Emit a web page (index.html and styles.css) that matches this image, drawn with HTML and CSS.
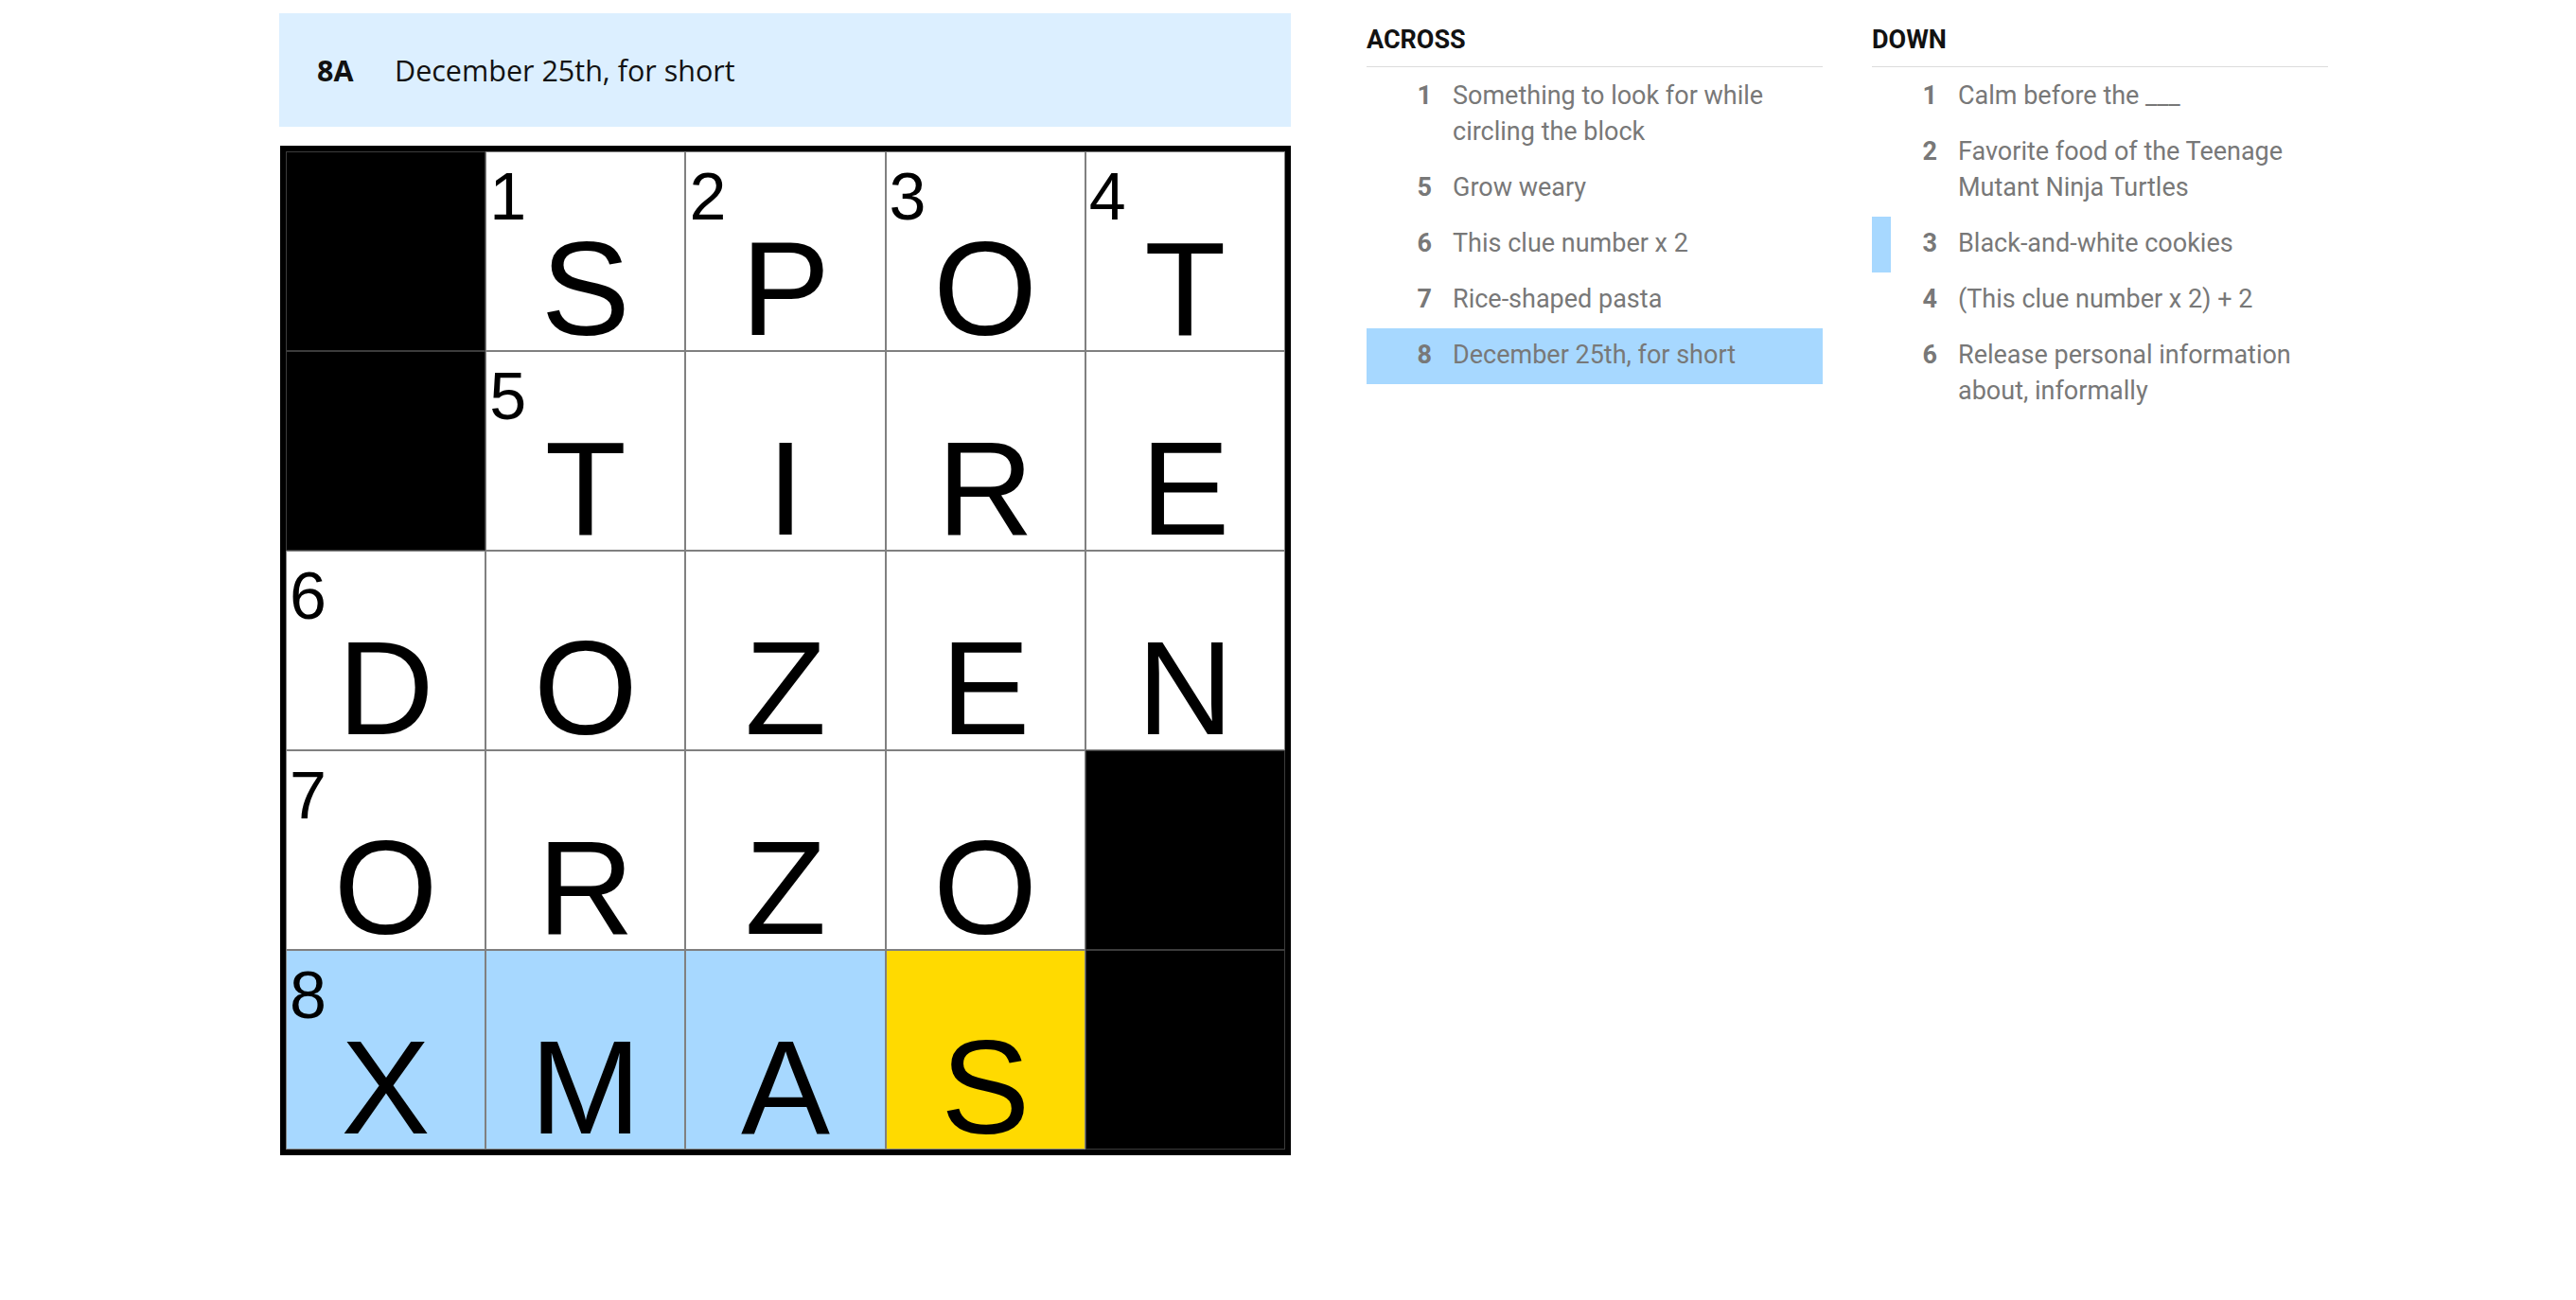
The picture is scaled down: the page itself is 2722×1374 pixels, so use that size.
FILE: index.html
```html
<!DOCTYPE html>
<html lang="en">
<head>
<meta charset="utf-8">
<title>The Mini Crossword</title>
<link rel="stylesheet" href="styles.css">
</head>
<body>
<main class="layout">
  <section class="board">
    <div class="clue-bar">
      <span class="clue-bar-label">8A</span>
      <span class="clue-bar-text">December 25th, for short</span>
    </div>
    <div class="grid">
      <div class="cell block"></div>
      <div class="cell"><span class="num">1</span><span class="letter">S</span></div>
      <div class="cell"><span class="num">2</span><span class="letter">P</span></div>
      <div class="cell"><span class="num">3</span><span class="letter">O</span></div>
      <div class="cell"><span class="num">4</span><span class="letter">T</span></div>

      <div class="cell block"></div>
      <div class="cell"><span class="num">5</span><span class="letter">T</span></div>
      <div class="cell"><span class="letter">I</span></div>
      <div class="cell"><span class="letter">R</span></div>
      <div class="cell"><span class="letter">E</span></div>

      <div class="cell"><span class="num">6</span><span class="letter">D</span></div>
      <div class="cell"><span class="letter">O</span></div>
      <div class="cell"><span class="letter">Z</span></div>
      <div class="cell"><span class="letter">E</span></div>
      <div class="cell"><span class="letter">N</span></div>

      <div class="cell"><span class="num">7</span><span class="letter">O</span></div>
      <div class="cell"><span class="letter">R</span></div>
      <div class="cell"><span class="letter">Z</span></div>
      <div class="cell"><span class="letter">O</span></div>
      <div class="cell block"></div>

      <div class="cell word"><span class="num">8</span><span class="letter">X</span></div>
      <div class="cell word"><span class="letter">M</span></div>
      <div class="cell word"><span class="letter">A</span></div>
      <div class="cell active"><span class="letter">S</span></div>
      <div class="cell block"></div>
    </div>
  </section>

  <section class="clues">
    <div class="clue-list">
      <h3 class="clue-title">ACROSS</h3>
      <ol class="clue-items">
        <li class="clue"><span class="clue-num">1</span><span class="clue-text">Something to look for while circling the block</span></li>
        <li class="clue"><span class="clue-num">5</span><span class="clue-text">Grow weary</span></li>
        <li class="clue"><span class="clue-num">6</span><span class="clue-text">This clue number x 2</span></li>
        <li class="clue"><span class="clue-num">7</span><span class="clue-text">Rice-shaped pasta</span></li>
        <li class="clue selected"><span class="clue-num">8</span><span class="clue-text">December 25th, for short</span></li>
      </ol>
    </div>
    <div class="clue-list">
      <h3 class="clue-title">DOWN</h3>
      <ol class="clue-items">
        <li class="clue"><span class="clue-num">1</span><span class="clue-text">Calm before the ___</span></li>
        <li class="clue"><span class="clue-num">2</span><span class="clue-text">Favorite food of the Teenage Mutant Ninja Turtles</span></li>
        <li class="clue crossing"><span class="clue-num">3</span><span class="clue-text">Black-and-white cookies</span></li>
        <li class="clue"><span class="clue-num">4</span><span class="clue-text">(This clue number x 2) + 2</span></li>
        <li class="clue"><span class="clue-num">6</span><span class="clue-text">Release personal information about, informally</span></li>
      </ol>
    </div>
  </section>
</main>
</body>
</html>
```

FILE: styles.css
```css
* {
  box-sizing: border-box;
}

html,
body {
  margin: 0;
  background: #ffffff;
}

body {
  font-family: Roboto, "Liberation Sans", sans-serif;
  color: #121212;
}

.layout {
  display: flex;
  align-items: flex-start;
  padding: 14px 0 0 295px;
}

/* ---------- board ---------- */

.board {
  width: 1069px;
  flex: none;
}

.clue-bar {
  display: flex;
  align-items: center;
  height: 120px;
  padding-left: 40px;
  background: #dcefff;
  font-family: "Open Sans", Roboto, sans-serif;
  font-size: 30.5px;
  color: #121212;
}

.clue-bar-label {
  font-weight: 700;
  width: 82px;
  flex: none;
}

.grid {
  display: grid;
  grid-template-columns: repeat(5, minmax(0, 1fr));
  grid-template-rows: repeat(5, minmax(0, 1fr));
  width: 1068px;
  height: 1067px;
  margin: 20px 0 0 1px;
  border: 6px solid #000000;
  background: #000000;
}

.cell {
  position: relative;
  background: #ffffff;
  border: 1px solid #808080;
  padding-top: 94px;
  text-align: center;
  font-family: "Liberation Sans", Arial, sans-serif;
  color: #000000;
}

.cell.block {
  background: #000000;
  border-color: #3c3c3c;
}

.cell.word {
  background: #a7d8ff;
}

.cell.active {
  background: #ffda00;
}

.num {
  position: absolute;
  left: 3px;
  top: 12px;
  font-size: 70px;
  line-height: 70px;
}

.letter {
  display: block;
  font-size: 141px;
  line-height: 100px;
}

/* ---------- clue lists ---------- */

.clues {
  display: flex;
  gap: 52px;
  margin-left: 80px;
  padding-top: 13px;
}

.clue-list {
  width: 482px;
}

.clue-title {
  margin: 0;
  padding-bottom: 13px;
  border-bottom: 1px solid #dcdcdc;
  font-size: 27px;
  line-height: 30px;
  font-weight: 700;
  color: #121212;
}

.clue-items {
  list-style: none;
  margin: 2px 0 0;
  padding: 0;
}

.clue {
  display: flex;
  align-items: flex-start;
  padding: 9px 0 12px;
  border-left: 20px solid transparent;
  font-size: 27px;
  line-height: 38px;
  color: #787878;
}

.clue.selected {
  background: #a7d8ff;
}

.clue.crossing {
  border-left-color: #a7d8ff;
}

.clue-num {
  flex: none;
  width: 49px;
  margin-right: 22px;
  text-align: right;
  font-weight: 700;
}

.clue-text {
  flex: 1;
}
```
